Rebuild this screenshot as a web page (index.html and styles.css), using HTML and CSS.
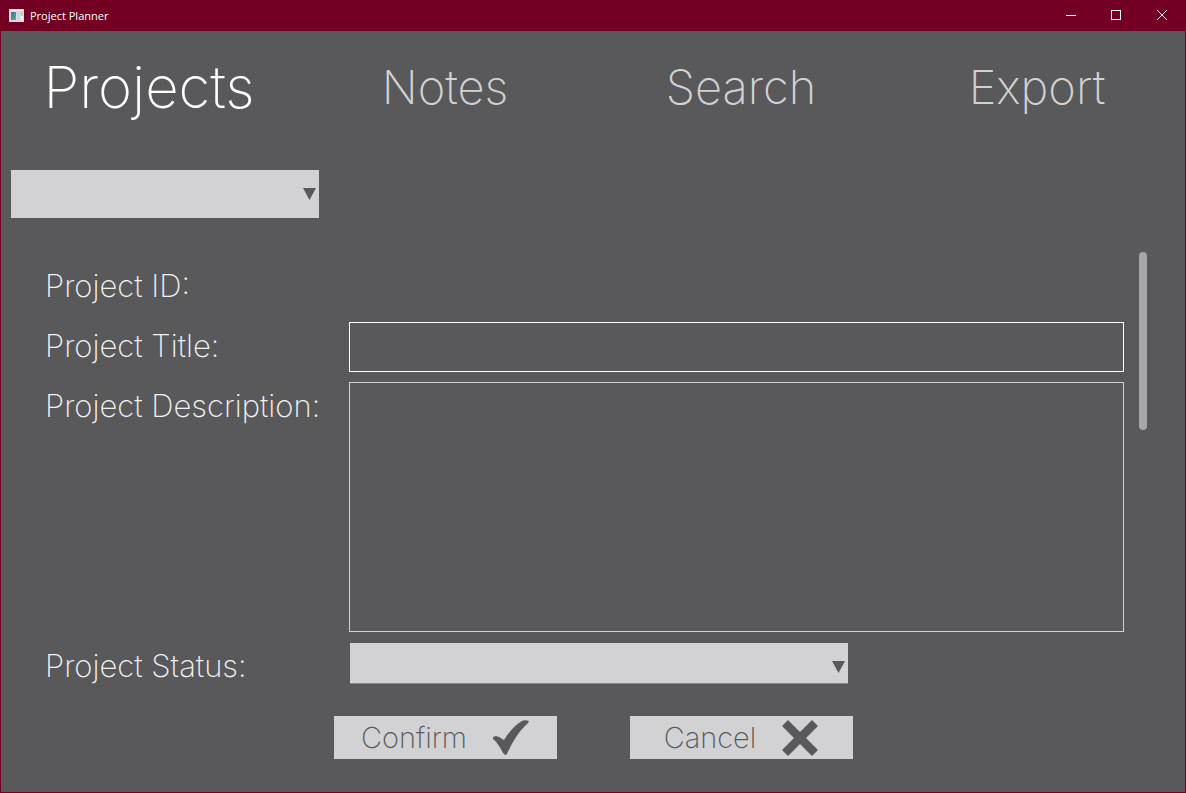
FILE: index.html
```html
<!DOCTYPE html>
<html lang="en">
<head>
<meta charset="utf-8">
<title>Project Planner</title>
<link rel="stylesheet" href="styles.css">
</head>
<body>
<div class="window">
  <header class="titlebar">
    <svg class="app-icon" viewBox="0 0 15 13" aria-hidden="true">
      <defs><linearGradient id="pane" x1="0" y1="0" x2="1" y2="1"><stop offset="0" stop-color="#3f6fa8"/><stop offset="1" stop-color="#5fae7c"/></linearGradient></defs>
      <rect width="15" height="13" fill="#dcdcde"/>
      <rect x="1" y="1" width="13" height="1" fill="#fff"/>
      <rect x="2" y="3" width="5" height="8" fill="url(#pane)"/>
      <rect x="8" y="3" width="3" height="8" fill="#d4d8da"/>
      <rect x="12" y="3" width="2" height="4" fill="#b4ccc4"/>
      <rect x="12" y="7" width="2" height="4" fill="#f4f4f4"/>
    </svg>
    <h1 class="title">Project Planner</h1>
    <div class="window-controls">
      <button class="window-button" type="button" aria-label="Minimize"><svg viewBox="0 0 12 12"><path d="M2 5.500H12"/></svg></button>
      <button class="window-button" type="button" aria-label="Maximize"><svg viewBox="0 0 12 12"><rect x="1.500" y="0.500" width="9" height="9"/></svg></button>
      <button class="window-button" type="button" aria-label="Close"><svg viewBox="0 0 12 12"><path d="M1 0L11 10M11 0L1 10"/></svg></button>
    </div>
  </header>
  <nav class="tabs">
    <a class="tab tab-active" href="#projects" aria-current="page">Projects</a>
    <a class="tab" href="#notes">Notes</a>
    <a class="tab" href="#search">Search</a>
    <a class="tab" href="#export">Export</a>
  </nav>
  <main class="content">
    <div class="select-wrap picker">
      <select class="select" aria-label="Project"><option></option></select>
      <svg class="arrow" viewBox="0 0 13 12" aria-hidden="true"><path d="M0 0H13L6.500 12Z"/></svg>
    </div>
    <form class="form">
      <div class="form-body">
        <div class="fields">
          <span class="label" id="id-label">Project ID:</span>
          <output class="project-id" aria-labelledby="id-label"></output>
          <label class="label" for="title">Project Title:</label>
          <input class="box title-box" id="title" type="text">
          <label class="label" for="description">Project Description:</label>
          <textarea class="box description-box" id="description"></textarea>
          <label class="label" for="status">Project Status:</label>
          <div class="select-wrap status">
            <select class="select" id="status"><option></option></select>
            <svg class="arrow" viewBox="0 0 13 12" aria-hidden="true"><path d="M0 0H13L6.500 12Z"/></svg>
          </div>
        </div>
        <div class="scroll-thumb"></div>
      </div>
      <div class="actions">
        <button class="action" type="button">Confirm
          <svg class="action-icon" viewBox="0 0 36 36" aria-hidden="true"><path d="M0 17L3 16L6 17L11 20C16 12 22 5 29 1C31 0 33 0 36 1L35 3C26 11 20 21 14 34L12 35L10 33C7 27 4 22 0 19Z"/></svg>
        </button>
        <button class="action" type="button">Cancel
          <svg class="action-icon" viewBox="0 0 36 36" aria-hidden="true"><path d="M0 6L6 0L18 12L30 0L36 6L24 18L36 30L30 36L18 24L6 36L0 30L12 18Z"/></svg>
        </button>
      </div>
    </form>
  </main>
</div>
</body>
</html>
```
FILE: styles.css
```css
* {
  box-sizing: border-box;
}

body {
  margin: 0;
  background: #59595b;
  color: #f2f2f2;
  font-family: Inter, sans-serif;
  font-weight: 150;
}

.window {
  display: flex;
  flex-direction: column;
  min-height: 100vh;
  border: 1px solid #730022;
  border-top: 0;
}

.titlebar {
  display: flex;
  align-items: center;
  height: 31px;
  padding-left: 8px;
  background: #730022;
}

.app-icon {
  width: 15px;
  height: 13px;
}

.title {
  margin: 0 auto 0 6px;
  color: #fff;
  font: 400 11px/16px "Open Sans", sans-serif;
}

.window-controls {
  display: flex;
}

.window-button {
  display: grid;
  place-items: center;
  width: 46px;
  height: 31px;
  padding: 0;
  border: 0;
  background: none;
}

.window-button svg {
  width: 12px;
  height: 12px;
  fill: none;
  stroke: #fff;
}

.tabs {
  display: grid;
  grid-template-columns: repeat(4, 1fr);
  align-items: center;
  height: 112px;
}

.tab {
  color: #d2d2d4;
  font-size: 47px;
  line-height: 56px;
  text-align: center;
  text-decoration: none;
}

.tab-active {
  color: #fff;
  font-size: 58px;
}

.content {
  padding: 27px 38px 33px 10px;
}

.select-wrap {
  position: relative;
}

.select {
  width: 100%;
  height: 100%;
  border: 0;
  border-radius: 0;
  background: #d2d2d4;
  color: #59595b;
  font: inherit;
  appearance: none;
}

.arrow {
  position: absolute;
  top: 18px;
  right: 3px;
  width: 13px;
  height: 12px;
  fill: #59595b;
  pointer-events: none;
}

.picker {
  width: 308px;
  height: 48px;
}

.form {
  padding-top: 34px;
}

.form-body {
  display: flex;
  gap: 15px;
  padding-left: 34px;
}

.fields {
  display: grid;
  flex: 1;
  grid-template-columns: 304px 1fr;
  row-gap: 10px;
  padding-top: 10px;
}

.label {
  font-size: 31px;
  line-height: 48px;
}

.project-id {
  height: 50px;
}

.box {
  width: 100%;
  margin: 0;
  padding: 8px;
  border: 1px solid #fff;
  border-radius: 0;
  background: transparent;
  color: #fff;
  font: inherit;
  font-size: 31px;
  resize: none;
}

.title-box {
  height: 50px;
}

.description-box {
  height: 250px;
  border-color: #d2d2d4;
}

.status {
  width: 498px;
  height: 41px;
  margin: 1px 0 0 1px;
}

.status .select {
  border-bottom: 1px solid #88888a;
}

.scroll-thumb {
  width: 8px;
  height: 178px;
  border-radius: 4px;
  background: #a6a6a8;
}

.actions {
  display: flex;
  justify-content: center;
  gap: 73px;
  margin: 26px 0 0 28px;
}

.action {
  display: flex;
  align-items: center;
  justify-content: center;
  gap: 26px;
  width: 223px;
  height: 43px;
  padding: 0;
  border: 0;
  background: #d2d2d4;
  color: #59595b;
  font: inherit;
  font-size: 29px;
}

.action-icon {
  width: 36px;
  height: 36px;
  fill: #59595b;
}
```
